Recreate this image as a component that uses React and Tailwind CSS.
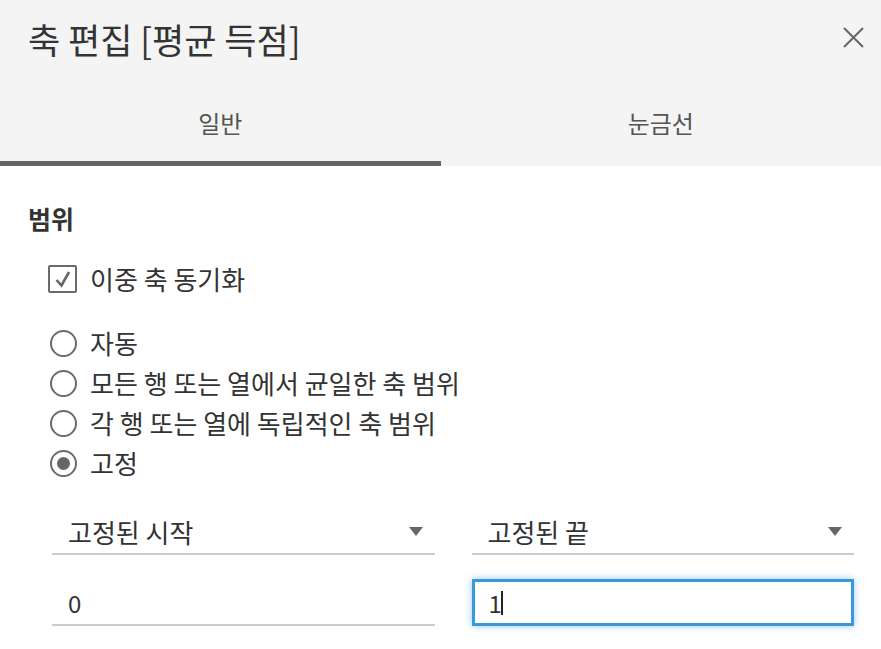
import { useState } from "react";

const FONT = "font-['Noto_Sans_CJK_KR','Noto_Sans',sans-serif]";

const RANGE_OPTIONS = [
  "자동",
  "모든 행 또는 열에서 균일한 축 범위",
  "각 행 또는 열에 독립적인 축 범위",
  "고정",
];

const Radio = ({ checked, label, onClick }) => (
  <button onClick={onClick} className="flex h-[40px] items-center gap-[13px] pl-[22px] text-left">
    <span className="flex h-[27px] w-[27px] items-center justify-center rounded-full border-2 border-[#6b6b6b]">
      {checked && <span className="h-[13px] w-[13px] rounded-full bg-[#666]" />}
    </span>
    <span className="text-[26px] leading-[30px] text-[#333]">{label}</span>
  </button>
);

const Dropdown = ({ label }) => (
  <div className="flex h-[45px] items-center justify-between border-b-2 border-[#cccccc] pl-[16px] pr-[12px]">
    <span className="text-[26px] leading-[30px] text-[#333]">{label}</span>
    <span className="h-0 w-0 border-x-[7px] border-t-[9px] border-x-transparent border-t-[#666]" />
  </div>
);

const App = () => {
  const [tab, setTab] = useState(0);
  const [synced, setSynced] = useState(true);
  const [range, setRange] = useState(3);

  return (
    <div className={`h-[649px] w-[881px] overflow-hidden bg-white ${FONT}`}>
      <div className="bg-[#f4f4f4]">
        <div className="flex h-[88px] items-start justify-between pl-[28px] pr-[17px] pt-[17px]">
          <h1 className="text-[35px] leading-[44px] text-[#333]">축 편집 [평균 득점]</h1>
          <button aria-label="Close" className="mt-[9px] flex h-[22px] w-[22px] items-center justify-center">
            <svg width="21" height="21" viewBox="0 0 21 21" fill="none" stroke="#666" strokeWidth="2">
              <path d="M1 1L20 20M20 1L1 20" />
            </svg>
          </button>
        </div>
        <div className="flex">
          {["일반", "눈금선"].map((t, i) => (
            <button
              key={t}
              onClick={() => setTab(i)}
              className={`flex h-[78px] flex-1 items-center justify-center border-b-[5px] pb-[3px] text-[24px] text-[#555] ${
                tab === i ? "border-[#666]" : "border-transparent"
              }`}
            >
              {t}
            </button>
          ))}
        </div>
      </div>

      <div className="px-[28px] pt-[39px]">
        <h2 className="text-[25px] font-bold leading-[26px] text-[#333]">범위</h2>

        <button onClick={() => setSynced((s) => !s)} className="mt-[34px] flex h-[28px] items-center gap-[13px] pl-[20px]">
          <span className="flex h-[28px] w-[29px] items-center justify-center rounded-[2px] border-2 border-[#6b6b6b]">
            {synced && (
              <svg width="20" height="20" viewBox="0 0 20 20" fill="none" stroke="#666" strokeWidth="2.6">
                <path d="M3.5 11L8.5 16.5L16 3" />
              </svg>
            )}
          </span>
          <span className="text-[26px] leading-[30px] text-[#333]">이중 축 동기화</span>
        </button>

        <div className="mt-[30px] flex flex-col">
          {RANGE_OPTIONS.map((label, i) => (
            <Radio key={label} label={label} checked={range === i} onClick={() => setRange(i)} />
          ))}
        </div>
      </div>

      <div className="mt-[27px] grid grid-cols-2 gap-x-[37px] gap-y-[24px] pl-[52px] pr-[27px]">
        <Dropdown label="고정된 시작" />
        <Dropdown label="고정된 끝" />
        <div className="flex h-[47px] items-center border-b-2 border-[#cccccc] pl-[16px] pt-[2px]">
          <span className="text-[24px] leading-[30px] text-[#333]">0</span>
        </div>
        <div className="flex h-[47px] items-center border-[3px] border-[#3a9ad9] pl-[14px] shadow-[0_0_7px_rgba(58,154,217,0.55)]">
          <span className="text-[24px] leading-[30px] text-[#333]">1</span>
          <span className="-ml-[1px] h-[24px] w-[2px] bg-[#222]" />
        </div>
      </div>
    </div>
  );
};

export default App;
